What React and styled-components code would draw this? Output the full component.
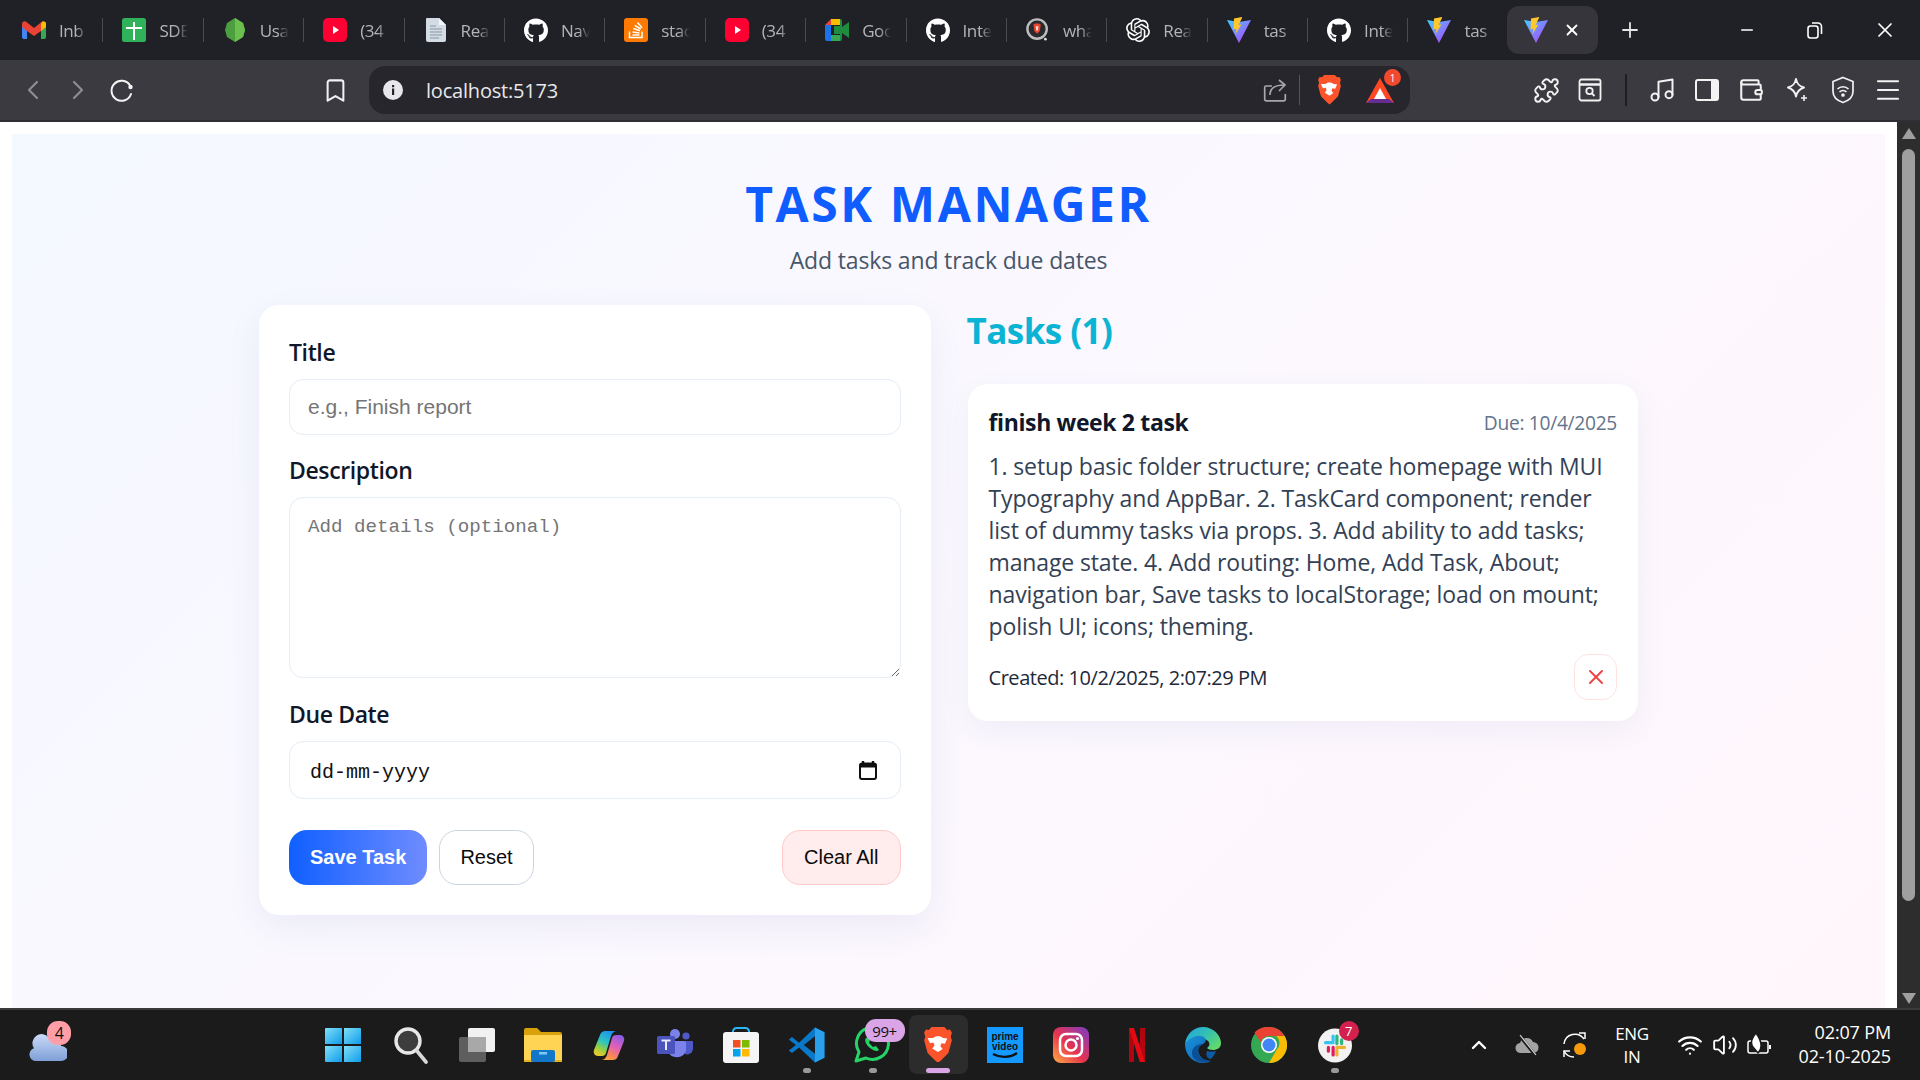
import React from "react";
import styled, { createGlobalStyle } from "styled-components";
import { FaGithub } from "react-icons/fa";
import { SiOpenai } from "react-icons/si";
import { ChevronLeft, ChevronRight, Bookmark, Puzzle, Music, Wallet, Menu, Plus, X, Minus, ChevronUp, Volume2, Wifi } from "lucide-react";

const UI = `"Open Sans", "Noto Sans", sans-serif`;
const Global = createGlobalStyle`
  html, body { margin: 0; padding: 0; height: 100%; overflow: hidden; background: #fff; }
  * { box-sizing: border-box; }
  #root { height: 100%; }
`;
const Shell = styled.div`width:1920px;height:1080px;display:flex;flex-direction:column;overflow:hidden;font-family:${UI};`;

/* ---- tabs ---- */
const TabStrip = styled.div`height:60px;background:#202027;display:flex;align-items:center;padding-left:3px;flex:none;`;
const Tab = styled.div`width:100.4px;height:24px;flex:none;display:flex;align-items:center;padding-left:19px;gap:13px;border-right:1px solid ${p=>p.$last?"transparent":"#4a4a50"};`;
const TabIcon = styled.span`width:24px;height:24px;flex:none;display:flex;align-items:center;justify-content:center;color:#fff;`;
const TabText = styled.span`width:29px;white-space:nowrap;font-size:17px;letter-spacing:-.4px;color:#b4b4b8;-webkit-mask-image:linear-gradient(90deg,#000 60%,transparent);mask-image:linear-gradient(90deg,#000 60%,transparent);`;
const ActiveTab = styled.div`width:91px;height:48px;margin-left:-2px;flex:none;background:#35353b;border-radius:12px;display:flex;align-items:center;padding-left:17px;gap:15px;color:#fff;`;
const NewTab = styled.div`width:48px;margin-left:8px;display:flex;justify-content:center;color:#e6e6e6;flex:none;`;
const WinButtons = styled.div`margin-left:auto;display:flex;color:#fff;`;
const WinBtn = styled.div`width:${p=>p.$w||68}px;height:60px;display:flex;align-items:center;justify-content:center;`;

/* ---- toolbar ---- */
const Toolbar = styled.div`height:62px;background:#3a3a40;border-bottom:2px solid #2e2e33;display:flex;align-items:center;padding-left:11px;flex:none;`;
const Slot = styled.div`width:${p=>p.$w||44}px;height:44px;flex:none;margin-left:${p=>p.$ml||0}px;display:flex;align-items:center;justify-content:center;color:${p=>p.$c||"#f2f2f2"};position:relative;`;
const UrlBar = styled.div`width:1041px;height:48px;margin-left:12px;background:#26262c;border-radius:16px;display:flex;align-items:center;padding:0 7px 0 12px;flex:none;`;
const UrlText = styled.span`margin-left:21px;font-size:20px;letter-spacing:-.2px;color:#e8e8ea;`;
const UrlEnd = styled.div`margin-left:auto;display:flex;align-items:center;`;
const VSep = styled.div`width:${p=>p.$w||1}px;height:${p=>p.$h||30}px;background:${p=>p.$c||"#55555b"};flex:none;margin:0 ${p=>p.$m||0}px;`;
const NotifyDot = styled.span`position:absolute;top:1px;right:2px;width:17px;height:17px;border-radius:50%;background:#f0492e;color:#fff;font-size:10px;display:flex;align-items:center;justify-content:center;`;

/* ---- page ---- */
const PageRow = styled.div`flex:1;min-height:0;display:flex;`;
const Viewport = styled.div`flex:1;background:#fff;padding:12px 12px 0 12px;min-width:0;`;
const Gradient = styled.main`height:100%;background:linear-gradient(135deg,#f4f8ff 0%,#fbf8fe 50%,#fff6fb 100%);padding-top:38px;display:flex;flex-direction:column;align-items:center;`;
const Title = styled.h1`margin:0;font-size:48px;line-height:64px;font-weight:700;letter-spacing:2.6px;color:#0f5cff;`;
const Subtitle = styled.p`margin:8px 0 0;font-size:23px;line-height:32px;letter-spacing:-.15px;color:#475569;`;
const Columns = styled.div`width:1379px;margin-top:29px;display:grid;grid-template-columns:1fr 1fr;gap:36px;align-items:start;`;
const FormCard = styled.form`background:#fff;border-radius:20px;padding:32px 30px 30px;box-shadow:0 12px 36px rgba(40,60,160,.07);display:flex;flex-direction:column;`;
const Field = styled.div`display:flex;flex-direction:column;gap:10px;margin-bottom:${p=>p.$mb}px;`;
const Label = styled.label`font-size:23px;line-height:30px;padding-bottom:2px;font-weight:600;letter-spacing:-.38px;color:#0f172a;`;
const TextInput = styled.input`height:56px;border:1.5px solid #e6edf6;border-radius:14px;padding:0 18px;font:21px "Liberation Sans",Arial,sans-serif;outline:none;&::placeholder{color:#757575;}`;
const TextArea = styled.textarea`height:181px;border:1.5px solid #e6edf6;border-radius:14px;padding:17px 18px;font:19.2px/24px "Liberation Mono",monospace;outline:none;resize:vertical;&::placeholder{color:#757575;}`;
const DateBox = styled.div`height:58px;border:1.5px solid #e6edf6;border-radius:14px;padding:4px 23px 0 20px;display:flex;align-items:center;justify-content:space-between;font:20px "Liberation Mono",monospace;font-weight:500;color:#111;`;
const DateIcon = styled.span`display:flex;margin-top:-4px;`;
const Actions = styled.div`display:flex;align-items:stretch;gap:12px;`;
const Button = styled.button`height:55px;border-radius:18px;font:20px "Liberation Sans",Arial,sans-serif;padding:0 ${p=>p.$px||21}px;color:#0b0b0b;background:#fff;border:1.5px solid #cbd5e1;`;
const SaveButton = styled(Button)`background:linear-gradient(90deg,#0f5fff,#6f8cff);border:none;color:#fff;font-weight:700;`;
const ClearButton = styled(Button)`margin-left:auto;background:#ffecec;border-color:#ffc9c9;`;
const Heading = styled.h2`margin:0 0 27px;font-size:35px;line-height:52px;font-weight:700;letter-spacing:-.55px;color:#0bb4d4;`;
const TaskCard = styled.article`margin-left:1px;background:#fff;border-radius:20px;padding:22px 21px 21px;box-shadow:0 10px 30px rgba(40,60,160,.06);`;
const TaskTop = styled.div`display:flex;justify-content:space-between;align-items:center;`;
const TaskName = styled.h3`margin:0;font-size:23px;line-height:32px;font-weight:700;letter-spacing:-.36px;color:#0f172a;`;
const TaskDue = styled.span`font-size:19.2px;letter-spacing:-.3px;color:#64748b;`;
const TaskBody = styled.p`margin:12px 0 0;font-size:23px;line-height:32px;letter-spacing:-.13px;color:#334155;`;
const TaskFoot = styled.div`margin-top:12px;display:flex;justify-content:space-between;align-items:center;`;
const Created = styled.span`font-size:20px;letter-spacing:-.45px;color:#1e293b;`;
const DeleteBtn = styled.button`width:43px;height:46px;border-radius:14px;border:1.5px solid #ffe3e3;background:#fff;color:#ef4444;display:flex;align-items:center;justify-content:center;padding:0;`;

/* ---- scrollbar ---- */
const ScrollTrack = styled.div`width:23px;background:#2d2d2d;flex:none;display:flex;flex-direction:column;align-items:center;padding-top:6px;`;
const ScrollThumb = styled.div`width:13px;height:752px;margin-top:10px;background:#9f9f9f;border-radius:7px;`;
const ArrowUp = styled.div`width:0;height:0;border-left:7px solid transparent;border-right:7px solid transparent;border-bottom:11px solid #9f9f9f;`;
const ArrowDown = styled.div`width:0;height:0;margin-top:92px;border-left:7px solid transparent;border-right:7px solid transparent;border-top:11px solid #9f9f9f;`;

/* ---- taskbar ---- */
const Taskbar = styled.footer`height:72px;flex:none;background:#1b1b1b;border-top:2px solid #3a3a3a;display:flex;align-items:center;color:#fff;`;
const TaskLeft = styled.div`width:310px;flex:none;padding-left:24px;display:flex;`;
const WeatherSlot = styled.div`width:48px;height:60px;display:flex;align-items:center;justify-content:center;position:relative;`;
const AppSlot = styled.div`width:66px;height:60px;flex:none;display:flex;align-items:center;justify-content:center;position:relative;`;
const StartSlot = styled(AppSlot)`width:67.5px;justify-content:flex-start;padding-left:15px;`;
const ActiveSlot = styled(AppSlot)`width:59px;height:59px;margin:-1px 4px 0 3px;background:#2c2c2c;border-radius:8px;`;
const RunDot = styled.span`position:absolute;left:50%;bottom:2px;transform:translateX(-50%);height:5px;width:8px;border-radius:3px;background:#9a9a9a;`;
const RunBar = styled.span`position:absolute;left:50%;bottom:1px;transform:translateX(-50%);height:5px;width:24px;border-radius:3px;background:#d9a5e6;`;
const Pill = styled.span`position:absolute;top:${p=>p.$t}px;left:${p=>p.$l}px;height:${p=>p.$h||22}px;min-width:${p=>p.$w||p.$h||22}px;border-radius:11px;background:${p=>p.$bg};color:${p=>p.$c||"#111"};font-size:${p=>p.$fs||15}px;display:flex;align-items:center;justify-content:center;letter-spacing:-.4px;`;
const Tray = styled.div`flex:1;display:flex;align-items:center;padding-left:91.5px;`;
const TraySlot = styled.div`width:${p=>p.$w}px;height:48px;flex:none;margin-left:${p=>p.$ml||0}px;display:flex;align-items:center;justify-content:center;color:#fff;`;
const Lang = styled.div`width:66px;text-align:center;font-size:17px;line-height:23px;letter-spacing:-.3px;flex:none;`;
const Clock = styled.div`margin-left:auto;padding:0 29px 3px 0;text-align:right;font-size:18px;line-height:24px;letter-spacing:-.15px;`;

/* ---- drawn icons ---- */
const Gmail = () => <svg width="24" height="20" viewBox="0 0 24 18"><path d="M0 3v13a2 2 0 0 0 2 2h3V8z" fill="#4285f4"/><path d="M24 3v13a2 2 0 0 1-2 2h-3V8z" fill="#34a853"/><path d="M5 10 0 6V3c0-2.500 3-3.500 4.500-2L12 7l7.500-6C21-.5 24 .5 24 3v3l-5 4-7 5z" fill="#ea4335"/><path d="M19 3l1-2c1.500-1 4-.5 4 2v3l-5 4z" fill="#fbbc04"/></svg>;
const Sheets = () => <svg width="24" height="24" viewBox="0 0 24 24"><rect width="24" height="24" rx="2.500" fill="#2fb25a"/><path d="M12 4v18M4 10h16" stroke="#fff" strokeWidth="2"/></svg>;
const Node = () => <svg width="22" height="24" viewBox="0 0 22 24"><path d="M11 0l8 5 2 7-2 7-8 5-8-5-2-7 2-7z" fill="#4b9f3f"/><path d="M11 0l8 5 2 7-2 7-8 5z" fill="#6cbf4e"/></svg>;
const Youtube = () => <svg width="24" height="24" viewBox="0 0 24 24"><rect width="24" height="24" rx="5" fill="#ff0033"/><path d="M10 8l6 4-6 4z" fill="#fff"/></svg>;
const Doc = () => <svg width="20" height="24" viewBox="0 0 20 24"><path d="M1 0h12l7 7v15a2 2 0 0 1-2 2H2a2 2 0 0 1-2-2V1a1 1 0 0 1 1-1z" fill="#d3dce4"/><path d="M13 0l7 7h-7z" fill="#f5f7f9"/><path d="M4 8h6M4 11h12M4 14h12M4 17h12M4 20h9" stroke="#8795a1" strokeWidth="1"/></svg>;
const Stack = () => <svg width="24" height="24" viewBox="0 0 24 24"><rect width="24" height="24" rx="3" fill="#ff7a00"/><path d="M5.500 13.500v6h12.500v-6M8.500 17h7M8.500 14l7 1M9.300 10.500l6.700 2.300M10.800 7.500l6 3.500M13.500 4.500l4.500 5.300" stroke="#fff" strokeWidth="1.500" fill="none"/></svg>;
const Meet = () => <svg width="24" height="22" viewBox="0 0 24 22"><path d="M6 0h9v6H6z" fill="#fbbc04"/><path d="M6 0v6H0z" fill="#ea4335"/><path d="M0 6h6v10H0z" fill="#1a73e8"/><path d="M0 16h6v6H2a2 2 0 0 1-2-2z" fill="#1a73e8"/><path d="M6 16h9v6H6z" fill="#34a853"/><path d="M15 0a2 2 0 0 1 2 2v6l7-5v16l-7-5v6a2 2 0 0 1-2 2V15H9V7h6z" fill="#1e8e3e"/></svg>;
const BraveSearch = () => <svg width="26" height="26" viewBox="0 0 26 26"><circle cx="12" cy="12" r="10.500" fill="#2a2a2e" stroke="#bdbdbd" strokeWidth="2.600"/><path d="M8 7l2-1h4l2 1-1 7-3 3-3-3z" fill="#e8452c"/><path d="M10.500 9h3l-.5 4-1 1-1-1z" fill="#f6d6cf"/><circle cx="21" cy="23" r="1.500" fill="#ddd"/></svg>;
let uid = 0;
const Vite = () => { const id = `v${uid++}`; return <svg width="24" height="26" viewBox="0 0 24 26"><defs><linearGradient id={id} x1="0" y1="0" x2="1" y2="1"><stop offset="0" stopColor="#41d1ff"/><stop offset="1" stopColor="#bd34fe"/></linearGradient></defs><path d="M0 3l12 2 12-2-12 23z" fill={`url(#${id})`}/><path d="M15 0L7 1.500l-.5 11 3-.7L8.500 17l6-9.500-3 .5 3.500-7z" fill="#ffc72b"/></svg>; };
const Reload = () => <svg width="26" height="26" viewBox="0 0 26 26" fill="none"><path d="M21 8.500A10 10 0 1 0 22 17" stroke="#f4f4f4" strokeWidth="2" strokeLinecap="round"/><circle cx="21.500" cy="10" r="2.200" fill="#f4f4f4"/></svg>;
const Info = () => <svg width="20" height="20" viewBox="0 0 20 20"><circle cx="10" cy="10" r="10" fill="#e8e8ec"/><rect x="9" y="8.500" width="2.200" height="6.500" fill="#26262c"/><rect x="9" y="5" width="2.200" height="2.200" fill="#26262c"/></svg>;
const Share = () => <svg width="25" height="25" viewBox="0 0 25 25" fill="none" stroke="#a7a7ab" strokeWidth="1.700"><path d="M9 8H3.200a1.500 1.500 0 0 0-1.500 1.500V21a1.800 1.800 0 0 0 1.800 1.800h17a1.800 1.800 0 0 0 1.800-1.800v-5"/><path d="M7 17c0-7 5-10 14-10M16 2l6 5-6 6" strokeLinejoin="round"/></svg>;
const BraveLogo = ({ w = 23 }) => <svg width={w} height={w * 1.28} viewBox="0 0 24 31"><path d="M6.500 0h11l2.500 2.500 2.500-.3L24 5l-1 3.500 1 3-3 11-6.500 6.500L12 31l-2.500-2L3 22.500l-3-11 1-3L0 5l1.500-2.800 2.500.3z" fill="#fb542b"/><path d="M7.500 9.500l3-1.500h3l3 1.500 3.500.5-2 4.500-3-.5-1 2.500 2 2.500-3.500 2.500h-1L7 18.500 9 16l-1-2.500-3 .5-2-4.500z" fill="#fff"/></svg>;
const Bat = () => <svg width="28" height="25" viewBox="0 0 28 25"><path d="M14 0l14 25H0z" fill="#ff4724"/><path d="M14 10l6 11H8z" fill="#fff"/><path d="M0 25l5-4h18l5 4z" fill="#662d91"/></svg>;
const DocSearch = () => <svg width="24" height="24" viewBox="0 0 24 24" fill="none" stroke="#f2f2f2" strokeWidth="1.800"><rect x="1.500" y="1.500" width="21" height="21" rx="2"/><path d="M1.500 6.500h21" strokeWidth="2.500"/><circle cx="11.500" cy="13" r="3.200"/><path d="M14 15.500l2.500 2.500"/></svg>;
const SidePanel = () => <svg width="24" height="22" viewBox="0 0 24 22"><rect x="1" y="1" width="22" height="20" rx="2" fill="none" stroke="#f2f2f2" strokeWidth="2"/><rect x="16" y="1" width="7" height="20" fill="#f2f2f2"/></svg>;
const Spark = () => <svg width="24" height="26" viewBox="0 0 24 26" fill="none" stroke="#f2f2f2" strokeWidth="1.900"><path d="M11 2c1 5 3 7 8 8.500-5 1.500-7 4-8 9-1-5-3-7.500-8-9C8 9 10 7 11 2z" strokeLinejoin="round"/><path d="M19 18v6M16 21h6" strokeWidth="1.600"/></svg>;
const ShieldWifi = () => <svg width="24" height="28" viewBox="0 0 24 28" fill="none" stroke="#f2f2f2" strokeWidth="1.700"><path d="M12 1.500l10 4v10c0 5-4 9-10 11C6 24.500 2 20.500 2 15.500v-10z"/><path d="M6.500 13c3-3 8-3 11 0M8.500 16c2-2 5-2 7 0"/><circle cx="12" cy="19" r="1" fill="#f2f2f2"/></svg>;
const Calendar = () => <svg width="18" height="19" viewBox="0 0 18 19"><path d="M4 0v3M14 0v3" stroke="#111" strokeWidth="2.400"/><rect x="1" y="2.500" width="16" height="15.500" rx="2" fill="none" stroke="#111" strokeWidth="2"/><rect x="1" y="2.500" width="16" height="4" fill="#111"/></svg>;
const Weather = () => <svg width="38" height="34" viewBox="0 0 38 34"><defs><linearGradient id="cl" x1="0" y1="0" x2="0" y2="1"><stop offset="0" stopColor="#c9dbf7"/><stop offset="1" stopColor="#7f9fd8"/></linearGradient></defs><circle cx="27" cy="8" r="6" fill="#e98a2c"/><path d="M7 33a6.500 6.500 0 0 1-2-12.700A9 9 0 0 1 20 10a8 8 0 0 1 12 8 7.500 7.500 0 0 1 0 15z" fill="url(#cl)"/></svg>;
const Windows = () => <svg width="36" height="36" viewBox="0 0 36 36"><defs><linearGradient id="wn" x1="0" y1="0" x2="1" y2="1"><stop offset="0" stopColor="#7fe0f8"/><stop offset="1" stopColor="#0f9bea"/></linearGradient></defs><g fill="url(#wn)"><path d="M1 1h16v16H0V2a1 1 0 0 1 1-1z"/><path d="M19 1h16a1 1 0 0 1 1 1v15H19z"/><path d="M0 19h17v16H1a1 1 0 0 1-1-1z"/><path d="M19 19h17v15a1 1 0 0 1-1 1H19z"/></g></svg>;
const SearchGlass = () => <svg width="36" height="38" viewBox="0 0 36 38" fill="none"><circle cx="15" cy="15" r="12" fill="#3d3d3d" stroke="#e8e8e8" strokeWidth="3.400"/><path d="M24 25l9 11" stroke="#d8d8d8" strokeWidth="3.600" strokeLinecap="round"/></svg>;
const TaskView = () => <svg width="36" height="34" viewBox="0 0 36 34"><rect x="0" y="9" width="27" height="25" rx="2" fill="#5e5e5e"/><rect x="9" y="0" width="27" height="24" rx="2" fill="#f1f1f1"/><rect x="9" y="9" width="18" height="15" fill="#a8a8a8"/></svg>;
const Explorer = () => <svg width="38" height="34" viewBox="0 0 38 34"><path d="M0 2a2 2 0 0 1 2-2h11l4 4h19a2 2 0 0 1 2 2v6H0z" fill="#d9a20c"/><path d="M0 7h38v27H0z" fill="#ffd354"/><path d="M0 32h38v2H0z" fill="#e5b21d"/><rect x="7" y="22" width="24" height="12" rx="2" fill="#1277c8"/><rect x="15" y="24" width="8" height="2.500" fill="#7ec8f5"/></svg>;
const Copilot = () => <svg width="32" height="31" viewBox="0 0 32 31"><defs><linearGradient id="cpa" x1=".7" y1="0" x2=".2" y2="1"><stop offset="0" stopColor="#1d8ff0"/><stop offset=".45" stopColor="#2cc6c0"/><stop offset=".75" stopColor="#9fd03a"/><stop offset="1" stopColor="#f3c72f"/></linearGradient><linearGradient id="cpb" x1=".8" y1="0" x2=".3" y2="1"><stop offset="0" stopColor="#8a5be8"/><stop offset=".45" stopColor="#e060b8"/><stop offset=".8" stopColor="#f8855a"/><stop offset="1" stopColor="#f9a63e"/></linearGradient></defs><path d="M12 1H24c-3 0-5 2-6 5L13 23c-.5 2-2 3-4 3H5c-3 0-5-3-4-6L7 5c1-3 3-4 5-4z" fill="url(#cpa)"/><path d="M20 30H8c3 0 5-2 6-5L19 8c.5-2 2-3 4-3h4c3 0 5 3 4 6L25 26c-1 3-3 4-5 4z" fill="url(#cpb)"/></svg>;
const Teams = () => <svg width="36" height="32" viewBox="0 0 36 32"><circle cx="18" cy="5" r="5" fill="#7b83eb"/><circle cx="29" cy="7" r="3.600" fill="#5059c9"/><path d="M27 12h8a1 1 0 0 1 1 1v7a6 6 0 0 1-8 5z" fill="#5059c9"/><path d="M11 12h16a2 2 0 0 1 2 2v8a10 10 0 0 1-18 1z" fill="#7b83eb"/><rect x="0" y="7" width="18" height="18" rx="1.500" fill="#4b53bc"/><path d="M4.500 11.500h9M9 11.500v9.500" stroke="#e8e8ff" strokeWidth="2"/></svg>;
const Store = () => <svg width="36" height="36" viewBox="0 0 36 36"><path d="M10 6V4a4 4 0 0 1 4-3h8a4 4 0 0 1 4 3v2" fill="none" stroke="#29b6f6" strokeWidth="2"/><rect y="5" width="36" height="31" rx="3" fill="#f5f5f5"/><rect x="10" y="13" width="7.500" height="7.500" fill="#f25022"/><rect x="19" y="13" width="7.500" height="7.500" fill="#7fba00"/><rect x="10" y="22" width="7.500" height="7.500" fill="#00a4ef"/><rect x="19" y="22" width="7.500" height="7.500" fill="#ffb900"/></svg>;
const VSCode = () => <svg width="38" height="38" viewBox="0 0 24 24"><path d="M17 1l6 3v16l-6 3-10-9.500L2.500 17 .5 15.500 5 12 .5 8.500 2.500 7 7 10.500z" fill="#0a78c9"/><path d="M17 1l6 3v16l-6 3z" fill="#2aa0ea"/><path d="M17 6.500L10 12l7 5.500z" fill="#1b1b1b"/></svg>;
const Whats = () => <svg width="37" height="36" viewBox="0 0 37 36" fill="none"><path d="M2 34l3-9A16 16 0 1 1 12 31z" stroke="#25d366" strokeWidth="3" strokeLinejoin="round"/><path d="M12 11c-2 2 0 7 4 10s7 4 9 2l-3-4-3 1-4-4 1-3-2-3z" fill="#25d366"/></svg>;
const Prime = () => <svg width="36" height="36" viewBox="0 0 36 36"><rect width="36" height="36" fill="#1399ff"/><path d="M6 27c7 4 17 4 24-1" stroke="#111" strokeWidth="2.200" fill="none"/><text x="18" y="13" fontSize="10" fontWeight="700" textAnchor="middle" fontFamily="Liberation Sans" fill="#111">prime</text><text x="18" y="23" fontSize="10" fontWeight="700" textAnchor="middle" fontFamily="Liberation Sans" fill="#111">video</text></svg>;
const Insta = () => <svg width="36" height="36" viewBox="0 0 36 36" fill="none"><defs><linearGradient id="ig" x1="0" y1="1" x2="1" y2="0"><stop offset="0" stopColor="#fdb045"/><stop offset=".45" stopColor="#e8334e"/><stop offset="1" stopColor="#7a3cc8"/></linearGradient></defs><rect width="36" height="36" rx="8" fill="url(#ig)"/><rect x="7" y="7" width="22" height="22" rx="6" stroke="#fff" strokeWidth="2.500"/><circle cx="18" cy="18" r="5.500" stroke="#fff" strokeWidth="2.500"/><circle cx="24.500" cy="11.500" r="1.600" fill="#fff"/></svg>;
const Netflix = () => <svg width="16" height="34" viewBox="0 0 16 34"><path d="M0 0h5v34l-5 .5z" fill="#b1060f"/><path d="M11 0h5v34.500l-5-.5z" fill="#b1060f"/><path d="M0 0h5l11 34.500h-5z" fill="#e50914"/></svg>;
const Edge = () => <svg width="36" height="36" viewBox="0 0 36 36"><defs><linearGradient id="eg" x1="0" y1="0" x2="1" y2=".7"><stop offset="0" stopColor="#1fa2e8"/><stop offset=".55" stopColor="#35c1b0"/><stop offset="1" stopColor="#62d96b"/></linearGradient><linearGradient id="eb" x1="0" y1="0" x2="1" y2="1"><stop offset="0" stopColor="#1b93de"/><stop offset="1" stopColor="#0c63ad"/></linearGradient></defs><path d="M0 17C1 7 9 0 18 0c10 0 18 8 18 16 0 5-4 7-8 7-3 0-5-1-6-2 3-2 3-5 1-7-5-5-17-3-23 3z" fill="url(#eg)"/><path d="M0 17c0-1 8-10 16-8 6 1 6 6 2 8-4 2-6 5-4 10 1 3 5 7 12 7-2 1-5 2-8 2C8 36 0 28 0 17z" fill="url(#eb)"/><path d="M14 27c-2-5 0-8 4-10-7 0-11 4-11 9 0 5 4 8 9 9 3 .5 7 0 10-1-7 0-11-4-12-7z" fill="#0c4f94"/><path d="M22 24c3 1 7 .5 9 0-1 3-3 6-5 8-3 0-6-3-4-8z" fill="#0c59a4"/></svg>;
const Chrome = () => <svg width="36" height="36" viewBox="0 0 36 36"><circle cx="18" cy="18" r="18" fill="#34a853"/><path d="M18 0a18 18 0 0 1 15.600 9H18a9 9 0 0 0-8.500 6L3.500 5.500A18 18 0 0 1 18 0z" fill="#ea4335"/><path d="M33.600 9A18 18 0 0 1 18 36l7.800-13.500A9 9 0 0 0 25 9z" fill="#fbbc04"/><circle cx="18" cy="18" r="8" fill="#fff"/><circle cx="18" cy="18" r="6.500" fill="#4285f4"/></svg>;
const Slack = () => <svg width="34" height="35" viewBox="0 0 36 36"><circle cx="18" cy="18" r="18" fill="#f2f2f2"/><g strokeWidth="3.400" strokeLinecap="round"><path d="M16 8v5M8 15h8" stroke="#36c5f0"/><path d="M25 12v4M20 8v8" stroke="#2eb67d"/><path d="M20 28v-5M28 20h-8" stroke="#ecb22e"/><path d="M11 20v4M16 20v8" stroke="#e01e5a"/></g></svg>;
const Cloud = () => <svg width="26" height="24" viewBox="0 0 26 24"><path d="M7 20a5 5 0 0 1-1-10 7 7 0 0 1 13-1 5.500 5.500 0 0 1 0 11z" fill="#a3a3a3"/><path d="M5 2l16 20" stroke="#1b1b1b" strokeWidth="3"/><path d="M6 2l16 20" stroke="#d9d9d9" strokeWidth="1.200"/></svg>;
const Sync = () => <svg width="26" height="28" viewBox="0 0 26 28" fill="none" stroke="#fff" strokeWidth="1.500"><path d="M22 8a11 11 0 0 0-20 5M2 20c2 4 6 6 10 6"/><path d="M17 2l6 0v6M2 26v-6h6"/><circle cx="18" cy="18" r="6" fill="#f59a0b" stroke="none"/></svg>;
const Battery = () => <svg width="26" height="26" viewBox="0 0 26 26" fill="none" stroke="#fff" strokeWidth="1.500"><rect x="1" y="9" width="20" height="12" rx="2"/><path d="M23 13v4" strokeWidth="2"/><path d="M9 1c-5 6-6 10-3 14l5 6c4-4 5-10-2-20z" fill="#fff" stroke="#1b1b1b"/></svg>;

const tabs = [
  [<Gmail/>, "Inb"], [<Sheets/>, "SDE"], [<Node/>, "Usa"], [<Youtube/>, "(34"], [<Doc/>, "Rea"],
  [<FaGithub size={25}/>, "Nav"], [<Stack/>, "stac"], [<Youtube/>, "(34"], [<Meet/>, "Goo"], [<FaGithub size={25}/>, "Inte"],
  [<BraveSearch/>, "wha"], [<SiOpenai size={24}/>, "Rea"], [<Vite/>, "tas"], [<FaGithub size={25}/>, "Inte"], [<Vite/>, "tas"],
];

export default function App() {
  return (
    <Shell>
      <Global />
      <TabStrip>
        {tabs.map(([icon, text], i) => (
          <Tab key={i} $last={i === tabs.length - 1}>
            <TabIcon>{icon}</TabIcon>
            <TabText>{text}</TabText>
          </Tab>
        ))}
        <ActiveTab><TabIcon><Vite/></TabIcon><X size={18} strokeWidth={2.4}/></ActiveTab>
        <NewTab><Plus size={24} strokeWidth={1.8}/></NewTab>
        <WinButtons>
          <WinBtn><Minus size={18} strokeWidth={2}/></WinBtn>
          <WinBtn>
            <svg width="16" height="17" viewBox="0 0 16 17" fill="none" stroke="#fff" strokeWidth="1.600"><rect x="1" y="4" width="10" height="12" rx="2.500"/><path d="M5 1h6a3.500 3.500 0 0 1 3.500 3.500V12"/></svg>
          </WinBtn>
          <WinBtn $w={71}><X size={24} strokeWidth={1.7}/></WinBtn>
        </WinButtons>
      </TabStrip>

      <Toolbar>
        <Slot $c="#8e8e92"><ChevronLeft size={32} strokeWidth={1.6}/></Slot>
        <Slot $c="#8e8e92" $ml={1}><ChevronRight size={32} strokeWidth={1.6}/></Slot>
        <Slot><Reload/></Slot>
        <Slot $ml={169}><Bookmark size={27} strokeWidth={1.8}/></Slot>
        <UrlBar>
          <Slot $w={24}><Info/></Slot>
          <UrlText>localhost:5173</UrlText>
          <UrlEnd>
            <Slot $w={30}><Share/></Slot>
            <VSep $m={9} $c="#55555b"/>
            <Slot $w={40}><BraveLogo/></Slot>
            <Slot $w={46} $ml={8}><Bat/><NotifyDot>1</NotifyDot></Slot>
          </UrlEnd>
        </UrlBar>
        <Slot $ml={114}><Puzzle size={27} strokeWidth={1.7}/></Slot>
        <Slot><DocSearch/></Slot>
        <VSep $w={2} $h={32} $c="#1f1f23" $m={13}/>
        <Slot><Music size={28} strokeWidth={1.7}/></Slot>
        <Slot $ml={1}><SidePanel/></Slot>
        <Slot><Wallet size={26} strokeWidth={1.9}/></Slot>
        <Slot $ml={2}><Spark/></Slot>
        <Slot $ml={2}><ShieldWifi/></Slot>
        <Slot $ml={1}><Menu size={30} strokeWidth={1.7}/></Slot>
      </Toolbar>

      <PageRow>
        <Viewport>
          <Gradient>
            <Title>TASK MANAGER</Title>
            <Subtitle>Add tasks and track due dates</Subtitle>
            <Columns>
              <FormCard onSubmit={e => e.preventDefault()}>
                <Field $mb={20}>
                  <Label>Title</Label>
                  <TextInput placeholder="e.g., Finish report" readOnly />
                </Field>
                <Field $mb={21}>
                  <Label>Description</Label>
                  <TextArea placeholder="Add details (optional)" readOnly />
                </Field>
                <Field $mb={31}>
                  <Label>Due Date</Label>
                  <DateBox><span>dd-mm-yyyy</span><DateIcon><Calendar/></DateIcon></DateBox>
                </Field>
                <Actions>
                  <SaveButton type="button">Save Task</SaveButton>
                  <Button type="button" $px={20}>Reset</Button>
                  <ClearButton type="button">Clear All</ClearButton>
                </Actions>
              </FormCard>
              <section>
                <Heading>Tasks (1)</Heading>
                <TaskCard>
                  <TaskTop>
                    <TaskName>finish week 2 task</TaskName>
                    <TaskDue>Due: 10/4/2025</TaskDue>
                  </TaskTop>
                  <TaskBody>1. setup basic folder structure; create homepage with MUI Typography and AppBar. 2. TaskCard component; render list of dummy tasks via props. 3. Add ability to add tasks; manage state. 4. Add routing: Home, Add Task, About; navigation bar, Save tasks to localStorage; load on mount; polish UI; icons; theming.</TaskBody>
                  <TaskFoot>
                    <Created>Created: 10/2/2025, 2:07:29 PM</Created>
                    <DeleteBtn type="button"><X size={24} strokeWidth={2}/></DeleteBtn>
                  </TaskFoot>
                </TaskCard>
              </section>
            </Columns>
          </Gradient>
        </Viewport>
        <ScrollTrack>
          <ArrowUp/>
          <ScrollThumb/>
          <ArrowDown/>
        </ScrollTrack>
      </PageRow>

      <Taskbar>
        <TaskLeft>
          <WeatherSlot>
            <Weather/>
            <Pill $t={6} $l={23} $bg="#ff9ea6" $h={24} $fs={16}>4</Pill>
          </WeatherSlot>
        </TaskLeft>
        <StartSlot><Windows/></StartSlot>
        <AppSlot><SearchGlass/></AppSlot>
        <AppSlot><TaskView/></AppSlot>
        <AppSlot><Explorer/></AppSlot>
        <AppSlot><Copilot/></AppSlot>
        <AppSlot><Teams/></AppSlot>
        <AppSlot><Store/></AppSlot>
        <AppSlot><VSCode/><RunDot/></AppSlot>
        <AppSlot><Whats/><Pill $t={4} $l={25} $h={23} $w={40} $bg="#d9a5e6" $fs={15}>99+</Pill><RunDot/></AppSlot>
        <ActiveSlot><BraveLogo w={28}/><RunBar/></ActiveSlot>
        <AppSlot><Prime/></AppSlot>
        <AppSlot><Insta/></AppSlot>
        <AppSlot><Netflix/></AppSlot>
        <AppSlot><Edge/></AppSlot>
        <AppSlot><Chrome/></AppSlot>
        <AppSlot><Slack/><Pill $t={6} $l={37} $h={20} $bg="#d4204f" $c="#fff" $fs={13}>7</Pill><RunDot/></AppSlot>
        <Tray>
          <TraySlot $w={40}><ChevronUp size={24} strokeWidth={2.4}/></TraySlot>
          <TraySlot $w={48} $ml={4}><Cloud/></TraySlot>
          <TraySlot $w={48}><Sync/></TraySlot>
          <Lang>ENG<br/>IN</Lang>
          <TraySlot $w={40} $ml={5}><Wifi size={26} strokeWidth={2}/></TraySlot>
          <TraySlot $w={30}><Volume2 size={26} strokeWidth={1.7}/></TraySlot>
          <TraySlot $w={40}><Battery/></TraySlot>
          <Clock>02:07 PM<br/>02-10-2025</Clock>
        </Tray>
      </Taskbar>
    </Shell>
  );
}
